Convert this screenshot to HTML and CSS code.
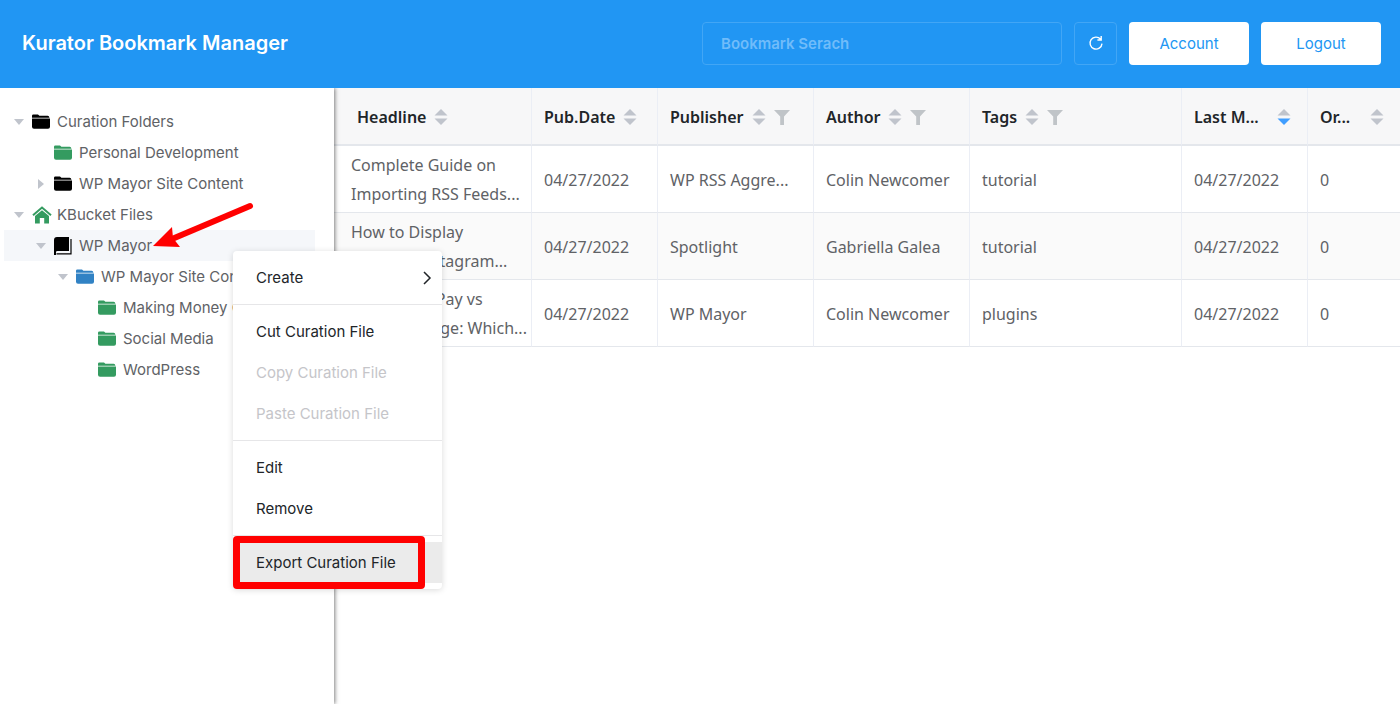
FILE: index.html
```html
<!DOCTYPE html>
<html lang="en">
<head>
    <meta charset="UTF-8">
    <meta name="viewport" content="width=device-width, initial-scale=1.0">
    <title>Kurator Bookmark Manager</title>
    <link rel="stylesheet" href="styles.css">
</head>
<body>
    <!-- Shared icons -->
    <svg class="sprite" aria-hidden="true">
        <symbol id="folder" viewBox="0 0 18 15">
            <path d="M0 3.8V1.8Q0 .5 1.4.5H6l1.4 1.3h8.2q1.6 0 1.9 2z"/>
            <path d="M0 4.6h18v8.2q0 2-2 2H2q-2 0-2-2z"/>
        </symbol>
        <symbol id="home" viewBox="0 0 20 18">
            <path d="M10 4.2l7 5.8v7.5h-4.8V12H7.8v5.5H3V10z"/>
            <path d="M1 9.2L10 1.6l9 7.6" fill="none" stroke="currentColor" stroke-width="2"/>
        </symbol>
        <symbol id="book" viewBox="0 0 18 18">
            <path d="M3 0h12v14H3.5q-1.5 0-1.5 1v3H0V3q0-3 3-3z"/>
            <path d="M2.5 16.8H17V2" fill="none" stroke="currentColor" stroke-width="1.2"/>
        </symbol>
        <symbol id="sort" viewBox="0 0 14 16">
            <path d="M7 0l6.5 6.5H.5z"/>
            <path d="M7 16l6.5-6.5H.5z"/>
        </symbol>
        <symbol id="sort-desc" viewBox="0 0 14 16">
            <path d="M7 0l6.5 6.5H.5z"/>
            <path d="M7 16l6.5-6.5H.5z" fill="#409eff"/>
        </symbol>
        <symbol id="filter" viewBox="0 0 16 15">
            <path d="M0 0h16L10 6.5V15H6.2V6.5z"/>
        </symbol>
    </svg>

    <header class="topbar">
        <h1>Kurator Bookmark Manager</h1>
        <input type="search" class="search" placeholder="Bookmark Serach" aria-label="Bookmark search">
        <button type="button" class="refresh" aria-label="Refresh">
            <svg width="16" height="16" viewBox="0 0 16 16"><path d="M12.6 4.2A6 6 0 1 0 14 8.6M13.2 1v4H9.4" fill="none" stroke="currentColor" stroke-width="1.4"/></svg>
        </button>
        <button type="button" class="btn">Account</button>
        <button type="button" class="btn">Logout</button>
    </header>

    <div class="layout">
        <nav class="sidebar">
            <ul class="tree">
                <li class="level-0"><span class="caret open"></span><svg class="icon"><use href="#folder"/></svg><a href="#">Curation Folders</a></li>
                <li class="level-1"><span class="caret none"></span><svg class="icon green"><use href="#folder"/></svg><a href="#">Personal Development</a></li>
                <li class="level-1"><span class="caret"></span><svg class="icon"><use href="#folder"/></svg><a href="#">WP Mayor Site Content</a></li>
                <li class="level-0"><span class="caret open"></span><svg class="icon home green"><use href="#home"/></svg><a href="#">KBucket Files</a></li>
                <li class="level-1 selected"><span class="caret open"></span><svg class="icon book"><use href="#book"/></svg><a href="#">WP Mayor</a></li>
                <li class="level-2"><span class="caret open"></span><svg class="icon blue"><use href="#folder"/></svg><a href="#">WP Mayor Site Content</a></li>
                <li class="level-3"><span class="caret none"></span><svg class="icon green"><use href="#folder"/></svg><a href="#">Making Money Online</a></li>
                <li class="level-3"><span class="caret none"></span><svg class="icon green"><use href="#folder"/></svg><a href="#">Social Media</a></li>
                <li class="level-3"><span class="caret none"></span><svg class="icon green"><use href="#folder"/></svg><a href="#">WordPress</a></li>
            </ul>
        </nav>

        <main class="content">
            <table>
                <colgroup>
                    <col class="col-headline">
                    <col class="col-date">
                    <col class="col-name">
                    <col class="col-name">
                    <col>
                    <col class="col-date">
                    <col class="col-order">
                </colgroup>
                <thead>
                    <tr>
                        <th><div class="head"><span>Headline</span><svg class="sort"><use href="#sort"/></svg></div></th>
                        <th><div class="head"><span>Pub.Date</span><svg class="sort"><use href="#sort"/></svg></div></th>
                        <th><div class="head"><span>Publisher</span><svg class="sort"><use href="#sort"/></svg><svg class="filter"><use href="#filter"/></svg></div></th>
                        <th><div class="head"><span>Author</span><svg class="sort"><use href="#sort"/></svg><svg class="filter"><use href="#filter"/></svg></div></th>
                        <th><div class="head"><span>Tags</span><svg class="sort"><use href="#sort"/></svg><svg class="filter"><use href="#filter"/></svg></div></th>
                        <th><div class="head spread"><span>Last M...</span><svg class="sort"><use href="#sort-desc"/></svg></div></th>
                        <th><div class="head spread"><span>Or...</span><svg class="sort"><use href="#sort"/></svg></div></th>
                    </tr>
                </thead>
                <tbody>
                    <tr>
                        <td>Complete Guide on<br>Importing RSS Feeds...</td>
                        <td>04/27/2022</td>
                        <td>WP RSS Aggre...</td>
                        <td>Colin Newcomer</td>
                        <td>tutorial</td>
                        <td>04/27/2022</td>
                        <td>0</td>
                    </tr>
                    <tr>
                        <td>How to Display<br>Multiple Instagram...</td>
                        <td>04/27/2022</td>
                        <td>Spotlight</td>
                        <td>Gabriella Galea</td>
                        <td>tutorial</td>
                        <td>04/27/2022</td>
                        <td>0</td>
                    </tr>
                    <tr>
                        <td>WordPress Pay vs<br>Payment Page: Which...</td>
                        <td>04/27/2022</td>
                        <td>WP Mayor</td>
                        <td>Colin Newcomer</td>
                        <td>plugins</td>
                        <td>04/27/2022</td>
                        <td>0</td>
                    </tr>
                </tbody>
            </table>
        </main>
    </div>

    <!-- Context menu of the selected file -->
    <div class="menu">
        <div class="menu-group">
            <button type="button">Create
                <svg width="10" height="14" viewBox="0 0 10 14"><path d="M2 1l6 6-6 6" fill="none" stroke="currentColor" stroke-width="1.5"/></svg>
            </button>
        </div>
        <div class="menu-group">
            <button type="button">Cut Curation File</button>
            <button type="button" disabled>Copy Curation File</button>
            <button type="button" disabled>Paste Curation File</button>
        </div>
        <div class="menu-group">
            <button type="button">Edit</button>
            <button type="button">Remove</button>
        </div>
        <div class="menu-group marked">
            <button type="button" class="active">Export Curation File</button>
        </div>
    </div>

    <svg class="arrow" viewBox="0 0 104 52" aria-hidden="true">
        <path d="M98 8L20 41" stroke="#f00" stroke-width="6" stroke-linecap="round"/>
        <path d="M1 48l19-19 1 11 7 9z" fill="#f00"/>
    </svg>
</body>
</html>
```
FILE: styles.css
```css
*, *::before, *::after {
    box-sizing: border-box;
}
body {
    margin: 0;
    min-height: 100vh;
    display: flex;
    flex-direction: column;
    position: relative;
    font-family: Inter, "Liberation Sans", sans-serif;
    font-size: 15px;
    color: #606266;
    background-color: #fff;
}
button, input {
    font: inherit;
}
svg {
    fill: currentColor;
    flex: none;
}
.sprite {
    position: absolute;
    width: 0;
    height: 0;
}

/* Top bar */
.topbar {
    display: flex;
    align-items: center;
    gap: 12px;
    height: 88px;
    padding: 0 19px 2px 22px;
    background-color: #2196f3;
}
.topbar h1 {
    margin: 0 auto 0 0;
    font-size: 20px;
    font-weight: 600;
    color: #fff;
}
.search {
    width: 360px;
    height: 43px;
    padding: 0 18px;
    border: 1px solid #42a6f5;
    border-radius: 4px;
    background: none;
    color: #fff;
}
.search::placeholder {
    color: #70bcfa;
    font-weight: 600;
    opacity: 1;
}
.refresh {
    display: flex;
    align-items: center;
    justify-content: center;
    width: 43px;
    height: 43px;
    padding: 0;
    border: 1px solid #42a6f5;
    border-radius: 4px;
    background: none;
    color: #fff;
}
.btn {
    width: 120px;
    height: 43px;
    border: 0;
    border-radius: 4px;
    background-color: #fff;
    color: #2196f3;
}

/* Folder tree */
.layout {
    display: flex;
    flex: 1;
}
.sidebar {
    position: relative;
    flex: none;
    width: 334px;
    padding: 18px 19px 0 4px;
    background-color: #fff;
    box-shadow: 1px 0 4px rgba(0, 0, 0, 0.5);
    clip-path: inset(0 -8px 0 0);
}
.tree {
    margin: 0;
    padding: 0;
    list-style: none;
}
.tree li {
    display: flex;
    align-items: center;
    height: 31px;
    white-space: nowrap;
    overflow: hidden;
}
.tree a {
    color: inherit;
    text-decoration: none;
}
.tree .selected {
    background-color: #f5f7fa;
}
.level-0 {
    padding-left: 10px;
}
.level-1 {
    padding-left: 32px;
}
.level-2 {
    padding-left: 54px;
}
.level-3 {
    padding-left: 76px;
}
.caret {
    width: 18px;
    flex: none;
}
.caret::before {
    content: "";
    display: block;
    width: 6px;
    margin-left: 2px;
    border: 5px solid transparent;
    border-left: 6px solid #c0c4cc;
    border-right: 0;
}
.caret.open::before {
    width: 10px;
    margin-left: 0;
    border: 5px solid transparent;
    border-top: 6px solid #c0c4cc;
    border-bottom: 0;
}
.caret.none::before {
    display: none;
}
.icon {
    width: 18px;
    height: 15px;
    margin-right: 7px;
    color: #000;
}
.icon.home {
    width: 20px;
    height: 18px;
    margin-right: 5px;
}
.icon.book {
    height: 18px;
}
.icon.green {
    color: #349b60;
}
.icon.blue {
    color: #3182c4;
}

/* Bookmark table */
.content {
    flex: 1;
    min-width: 0;
}
table {
    width: 100%;
    table-layout: fixed;
    border-collapse: separate;
    border-spacing: 0;
    font-family: "Noto Sans", "Open Sans", sans-serif;
    font-size: 16px;
    line-height: 29px;
}
.col-headline {
    width: 198px;
}
.col-date {
    width: 126px;
}
.col-name {
    width: 156px;
}
.col-order {
    width: 92px;
}
th, td {
    height: 67px;
    padding: 5px 0 3px 12px;
    border-right: 1px solid #ebeef5;
    border-bottom: 1px solid #e4e7ec;
    text-align: left;
    white-space: nowrap;
}
th {
    height: 58px;
    border-bottom-width: 2px;
    background-color: #f7f7f8;
    color: #212529;
    font-weight: 600;
}
th:first-child {
    padding-left: 23px;
}
td:first-child {
    padding-left: 17px;
}
th:last-child, td:last-child {
    border-right: 0;
}
tbody tr:nth-child(even) {
    background-color: #fafafa;
}
.head {
    display: flex;
    align-items: center;
    gap: 8px;
}
.head.spread {
    justify-content: space-between;
    padding-right: 16px;
}
.sort {
    width: 14px;
    height: 16px;
    color: #c0c4cc;
}
.filter {
    width: 16px;
    height: 15px;
    color: #c0c4c8;
}

/* Context menu */
.menu {
    position: absolute;
    top: 251px;
    left: 233px;
    width: 209px;
    border-radius: 4px;
    background-color: #fff;
    box-shadow: 0 1px 6px rgba(0, 0, 0, 0.15);
}
.menu-group {
    position: relative;
    padding: 6px 0;
}
.menu-group + .menu-group {
    border-top: 1px solid #e6e6e8;
}
.menu button {
    display: flex;
    align-items: center;
    justify-content: space-between;
    width: 100%;
    height: 41px;
    padding: 0 10px 0 23px;
    border: 0;
    background: none;
    color: #212529;
    text-align: left;
}
.menu button:disabled {
    color: #c5c5c9;
}
.menu button.active {
    background-color: #ebebeb;
}

/* Red markers */
.marked::after {
    content: "";
    position: absolute;
    top: 0;
    left: 0;
    width: 192px;
    height: 53px;
    border: 7px solid #f00;
    border-radius: 4px;
}
.arrow {
    position: absolute;
    top: 198px;
    left: 152px;
    width: 104px;
    height: 52px;
}
```
